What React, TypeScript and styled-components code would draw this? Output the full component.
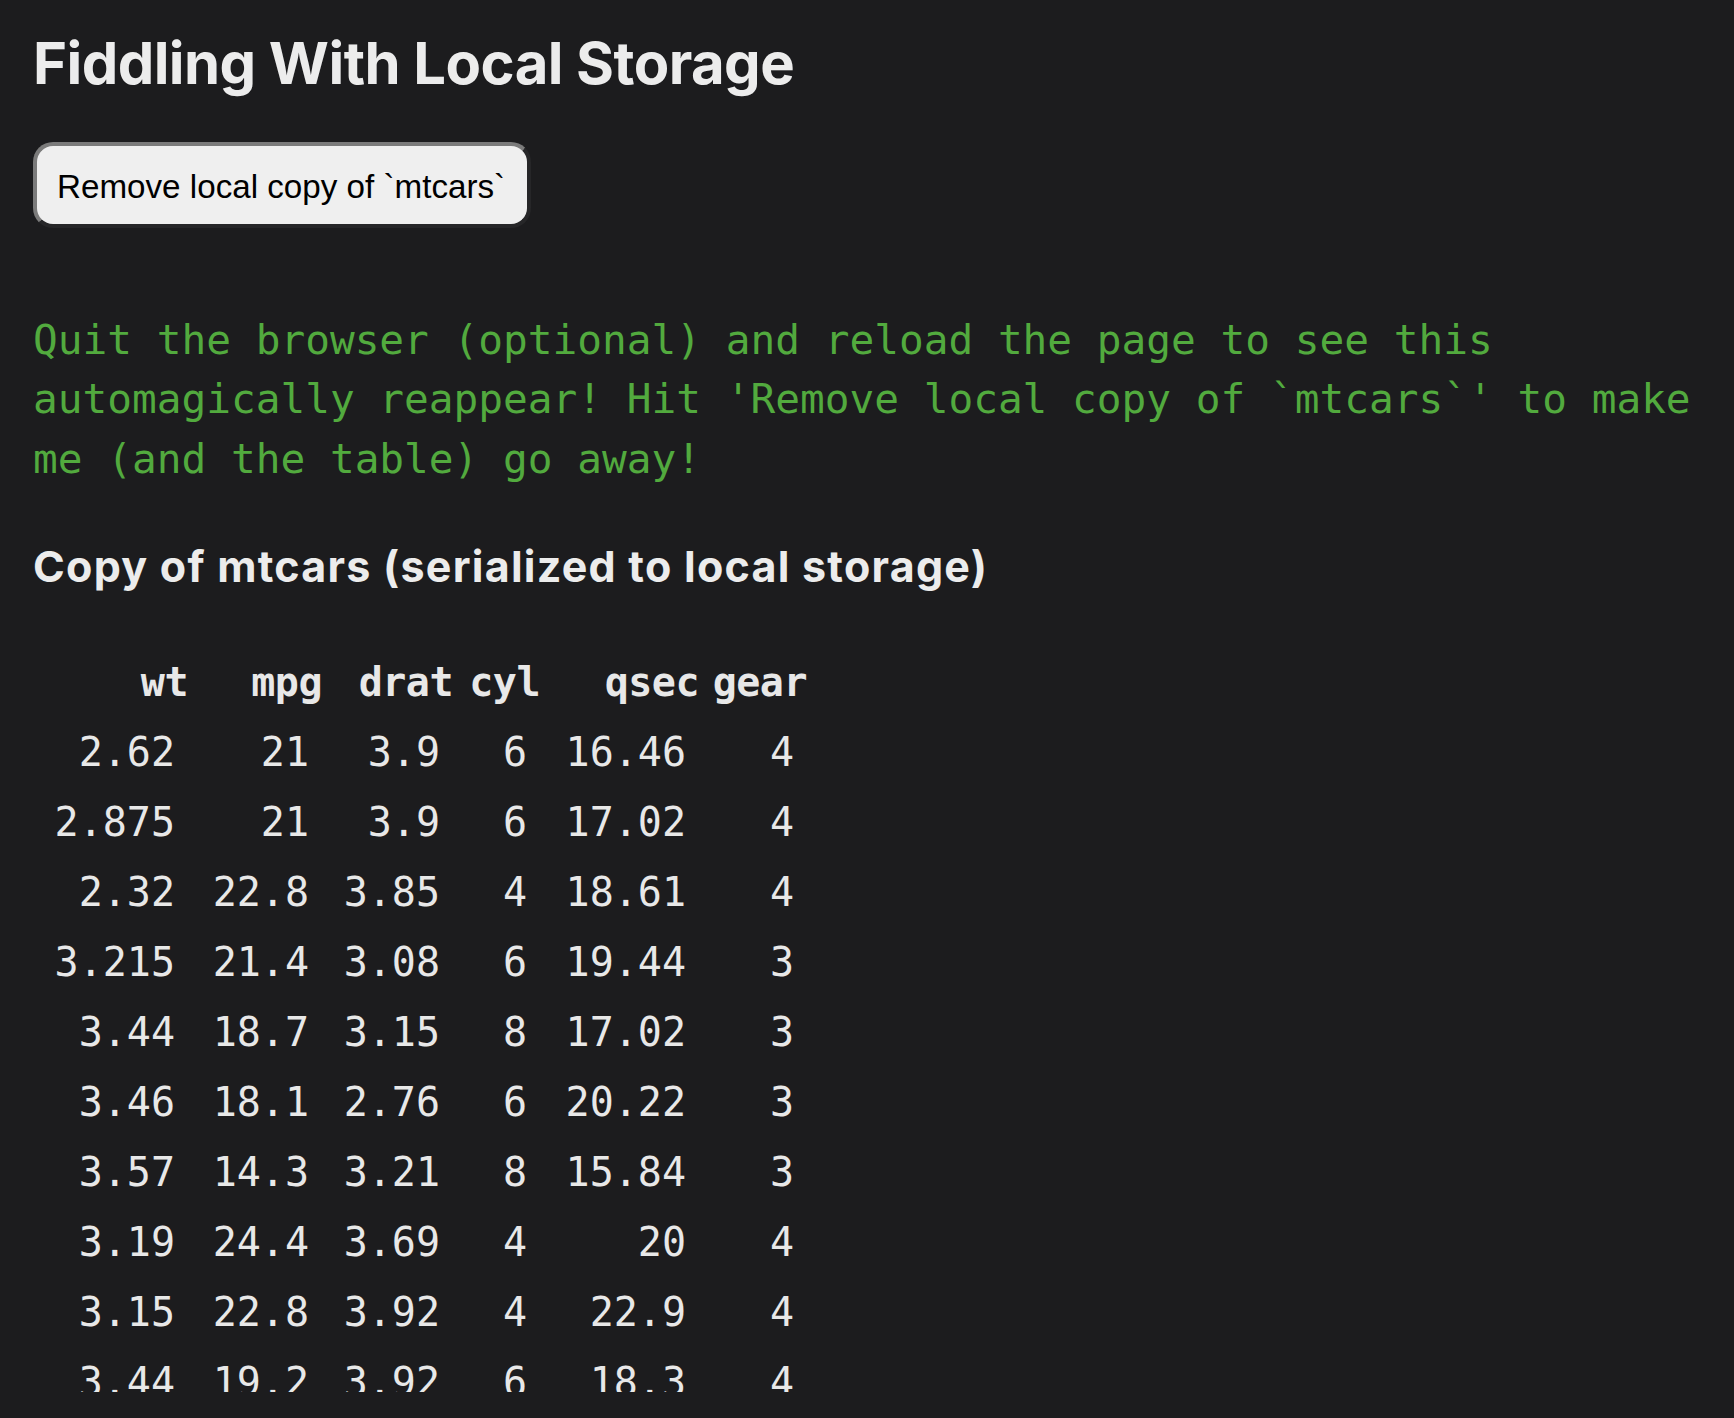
import React from "react";
import styled, { createGlobalStyle } from "styled-components";

const Global = createGlobalStyle`
  html, body { margin: 0; padding: 0; background: #1c1c1e; }
  body {
    padding: 29px 33px 0 33px;
    color: #ebebeb;
    font-family: Inter, "Noto Sans", sans-serif;
    overflow: hidden;
  }
`;

const Page = styled.main`
  display: flex;
  flex-direction: column;
  align-items: flex-start;
`;

const Title = styled.h1`
  margin: 0;
  font-family: Inter, "Noto Sans", sans-serif;
  font-weight: 700;
  font-size: 58px;
  line-height: 1.2;
  letter-spacing: -0.55px;
  color: #ececec;
`;

const RemoveButton = styled.button`
  margin-top: 43px;
  box-sizing: border-box;
  height: 86px;
  padding: 20px 22px 16px 20px;
  font-family: "Liberation Sans", Arial, sans-serif;
  font-size: 33.2px;
  color: #000;
  background: #efefef;
  border-style: solid;
  border-width: 4px;
  border-color: #7b7b7b #262628 #262628 #7b7b7b;
  border-radius: 20px;
  cursor: pointer;
`;

const Note = styled.p`
  margin: 83px 0 0 0;
  font-family: "DejaVu Sans Mono", "Liberation Mono", monospace;
  font-size: 41.1px;
  line-height: 59.5px;
  color: #52aa3e;
`;

const Subtitle = styled.h2`
  margin: 52px 0 0 0;
  font-family: Inter, "Noto Sans", sans-serif;
  font-weight: 700;
  font-size: 43px;
  line-height: 1.2;
  letter-spacing: 1.25px;
  color: #ececec;
`;

const TableFrame = styled.div`
  margin-top: 54px;
  height: 745px;
  overflow: hidden;
`;

const DataTable = styled.table`
  border-collapse: separate;
  border-spacing: 0;
  table-layout: fixed;
  font-family: "DejaVu Sans Mono", "Liberation Mono", monospace;
  font-size: 40px;
  color: #e8e8e8;
`;

const HeadCell = styled.th<{ $w: number }>`
  width: ${(p) => p.$w}px;
  height: 70px;
  padding: 0;
  text-align: right;
  font-weight: 700;
  line-height: 70px;
  letter-spacing: -0.5px;
`;

const Cell = styled.td`
  height: 70px;
  padding: 0 13px 0 0;
  text-align: right;
  line-height: 70px;
`;

const columns: { key: string; w: number }[] = [
  { key: "wt", w: 155 },
  { key: "mpg", w: 134 },
  { key: "drat", w: 131 },
  { key: "cyl", w: 87 },
  { key: "qsec", w: 159 },
  { key: "gear", w: 108 },
];

const rows: (string | number)[][] = [
  [2.62, 21, 3.9, 6, 16.46, 4],
  [2.875, 21, 3.9, 6, 17.02, 4],
  [2.32, 22.8, 3.85, 4, 18.61, 4],
  [3.215, 21.4, 3.08, 6, 19.44, 3],
  [3.44, 18.7, 3.15, 8, 17.02, 3],
  [3.46, 18.1, 2.76, 6, 20.22, 3],
  [3.57, 14.3, 3.21, 8, 15.84, 3],
  [3.19, 24.4, 3.69, 4, 20, 4],
  [3.15, 22.8, 3.92, 4, 22.9, 4],
  [3.44, 19.2, 3.92, 6, 18.3, 4],
  [3.44, 17.8, 3.92, 6, 18.9, 4],
  [4.07, 16.4, 3.07, 8, 17.4, 3],
];

export default function App() {
  return (
    <>
      <Global />
      <Page>
        <Title>Fiddling With Local Storage</Title>
        <RemoveButton type="button">Remove local copy of `mtcars`</RemoveButton>
        <Note>
          Quit the browser (optional) and reload the page to see this automagically reappear! Hit
          'Remove local copy of `mtcars`' to make me (and the table) go away!
        </Note>
        <Subtitle>Copy of mtcars (serialized to local storage)</Subtitle>
        <TableFrame>
          <DataTable>
            <thead>
              <tr>
                {columns.map((c) => (
                  <HeadCell key={c.key} $w={c.w}>
                    {c.key}
                  </HeadCell>
                ))}
              </tr>
            </thead>
            <tbody>
              {rows.map((r, i) => (
                <tr key={i}>
                  {r.map((v, j) => (
                    <Cell key={j}>{v}</Cell>
                  ))}
                </tr>
              ))}
            </tbody>
          </DataTable>
        </TableFrame>
      </Page>
    </>
  );
}
